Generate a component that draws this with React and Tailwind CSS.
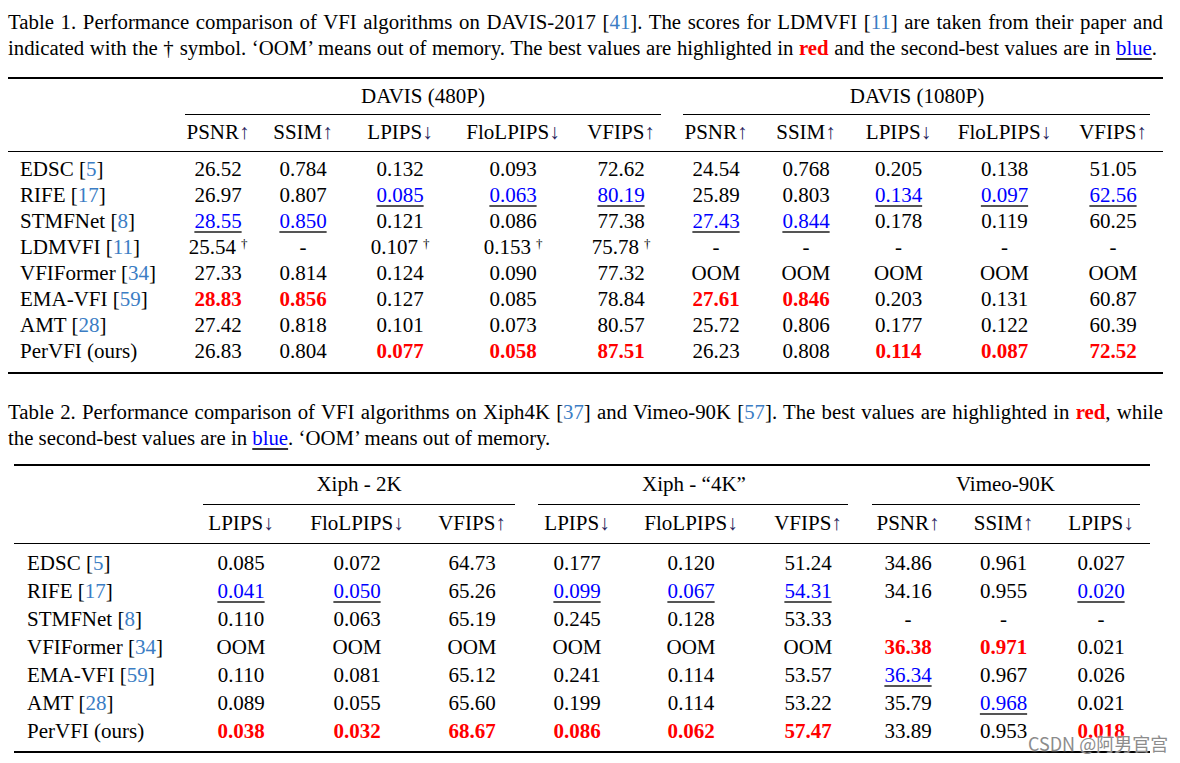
import React from "react";

const t1 = [
  ["EDSC", "5", ["26.52", "0.784", "0.132", "0.093", "72.62", "24.54", "0.768", "0.205", "0.138", "51.05"]],
  ["RIFE", "17", ["26.97", "0.807", "_0.085", "_0.063", "_80.19", "25.89", "0.803", "_0.134", "_0.097", "_62.56"]],
  ["STMFNet", "8", ["_28.55", "_0.850", "0.121", "0.086", "77.38", "_27.43", "_0.844", "0.178", "0.119", "60.25"]],
  ["LDMVFI", "11", ["25.54†", "-", "0.107†", "0.153†", "75.78†", "-", "-", "-", "-", "-"]],
  ["VFIFormer", "34", ["27.33", "0.814", "0.124", "0.090", "77.32", "OOM", "OOM", "OOM", "OOM", "OOM"]],
  ["EMA-VFI", "59", ["*28.83", "*0.856", "0.127", "0.085", "78.84", "*27.61", "*0.846", "0.203", "0.131", "60.87"]],
  ["AMT", "28", ["27.42", "0.818", "0.101", "0.073", "80.57", "25.72", "0.806", "0.177", "0.122", "60.39"]],
  ["PerVFI (ours)", null, ["26.83", "0.804", "*0.077", "*0.058", "*87.51", "26.23", "0.808", "*0.114", "*0.087", "*72.52"]],
];

const t2 = [
  ["EDSC", "5", ["0.085", "0.072", "64.73", "0.177", "0.120", "51.24", "34.86", "0.961", "0.027"]],
  ["RIFE", "17", ["_0.041", "_0.050", "65.26", "_0.099", "_0.067", "_54.31", "34.16", "0.955", "_0.020"]],
  ["STMFNet", "8", ["0.110", "0.063", "65.19", "0.245", "0.128", "53.33", "-", "-", "-"]],
  ["VFIFormer", "34", ["OOM", "OOM", "OOM", "OOM", "OOM", "OOM", "*36.38", "*0.971", "0.021"]],
  ["EMA-VFI", "59", ["0.110", "0.081", "65.12", "0.241", "0.114", "53.57", "_36.34", "0.967", "0.026"]],
  ["AMT", "28", ["0.089", "0.055", "65.60", "0.199", "0.114", "53.22", "35.79", "_0.968", "0.021"]],
  ["PerVFI (ours)", null, ["*0.038", "*0.032", "*68.67", "*0.086", "*0.062", "*57.47", "33.89", "0.953", "*0.018"]],
];

function Cite({ n }) {
  return <span className="text-[#3b7dc4]">{n}</span>;
}

function Val({ v }) {
  let text = v;
  let dagger = false;
  if (text.endsWith("†")) {
    dagger = true;
    text = text.slice(0, -1);
  }
  if (text.startsWith("_")) {
    return (
      <span className="text-[#0000ff] underline decoration-[#555] decoration-[1.5px] underline-offset-[3px]">
        {text.slice(1)}
      </span>
    );
  }
  if (text.startsWith("*")) {
    return <span className="font-bold text-[#ff0000]">{text.slice(1)}</span>;
  }
  return (
    <span>
      {text}
      {dagger && <sup className="ml-[5px] text-[13px]">†</sup>}
    </span>
  );
}

function Head({ label, up, h = "h-[36px]" }) {
  return (
    <div className={`flex ${h} items-center justify-center`}>
      {label}
      <span className="text-[#2a1f5c]">{up ? "↑" : "↓"}</span>
    </div>
  );
}

function Method({ name, cite, pad }) {
  return (
    <div className={pad}>
      {name}
      {cite && (
        <>
          {" ["}
          <Cite n={cite} />
          {"]"}
        </>
      )}
    </div>
  );
}

export default function App() {
  const t1Cols = "grid grid-cols-[167px_86px_84px_110px_116px_100px_90px_90px_95px_117px_100px]";
  const t2Cols = "grid grid-cols-[171px_112px_120px_110px_100px_128px_106px_94px_97px_98px]";

  return (
    <div className="relative w-[1180px] h-[763px] overflow-hidden bg-white text-black font-['Liberation_Serif',serif]">
      {/* Table 1 caption */}
      <div className="w-[1163px] pl-[8px] pt-[9px] text-[20.8px] leading-[26px] whitespace-nowrap">
        <div className="text-justify [text-align-last:justify]">
          Table 1. Performance comparison of VFI algorithms on DAVIS-2017 [<Cite n="41" />]. The scores for LDMVFI [<Cite n="11" />] are taken from their paper and
        </div>
        <div className="text-justify [text-align-last:justify] pr-[6px]">
          indicated with the † symbol. ‘OOM’ means out of memory. The best values are highlighted in{" "}
          <span className="font-bold text-[#ff0000]">red</span> and the second-best values are in{" "}
          <span className="text-[#0000ff] underline decoration-[#333] underline-offset-[3px]">blue</span>.
        </div>
      </div>

      {/* Table 1 */}
      <div className="ml-[8px] mt-[16px] w-[1155px] text-[21px]">
        <div className="h-[2px] bg-black" />
        <div className={t1Cols}>
          <div />
          <div className="col-span-5 flex flex-col">
            <div className="flex h-[35px] items-center justify-center">DAVIS (480P)</div>
            <div className="mx-[10px] h-px bg-black" />
          </div>
          <div className="col-span-5 flex flex-col">
            <div className="flex h-[35px] items-center justify-center">DAVIS (1080P)</div>
            <div className="ml-[12px] mr-[13px] h-px bg-black" />
          </div>
          <div />
          <Head label="PSNR" up />
          <Head label="SSIM " up />
          <Head label="LPIPS" />
          <Head label="FloLPIPS" />
          <Head label="VFIPS" up />
          <Head label="PSNR" up />
          <Head label="SSIM" up />
          <Head label="LPIPS" />
          <Head label="FloLPIPS" />
          <Head label="VFIPS" up />
        </div>
        <div className="h-px bg-black" />
        <div className={`${t1Cols} pt-[5px] pb-[7px]`}>
          {t1.map(([name, cite, vals]) => (
            <React.Fragment key={name}>
              <div className="flex h-[26px] items-center">
                <Method name={name} cite={cite} pad="pl-[12px]" />
              </div>
              {vals.map((v, i) => (
                <div key={i} className="flex h-[26px] items-center justify-center">
                  <Val v={v} />
                </div>
              ))}
            </React.Fragment>
          ))}
        </div>
        <div className="h-[2px] bg-black" />
      </div>

      {/* Table 2 caption */}
      <div className="mt-[25px] w-[1163px] pl-[8px] text-[20.8px] leading-[26px] whitespace-nowrap">
        <div className="text-justify [text-align-last:justify]">
          Table 2. Performance comparison of VFI algorithms on Xiph4K [<Cite n="37" />] and Vimeo-90K [<Cite n="57" />]. The best values are highlighted in{" "}
          <span className="font-bold text-[#ff0000]">red</span>, while
        </div>
        <div>
          the second-best values are in{" "}
          <span className="text-[#0000ff] underline decoration-[#333] underline-offset-[3px]">blue</span>. ‘OOM’ means out of memory.
        </div>
      </div>

      {/* Table 2 */}
      <div className="ml-[14px] mt-[13px] w-[1136px] text-[21px]">
        <div className="h-[2px] bg-black" />
        <div className={t2Cols}>
          <div />
          <div className="col-span-3 flex flex-col">
            <div className="flex h-[38px] items-center justify-center pl-[6px]">Xiph - 2K</div>
            <div className="ml-[18px] mr-[12px] h-px bg-black" />
          </div>
          <div className="col-span-3 flex flex-col">
            <div className="flex h-[38px] items-center justify-center">Xiph - “4K”</div>
            <div className="ml-[11px] mr-[13px] h-px bg-black" />
          </div>
          <div className="col-span-3 flex flex-col">
            <div className="flex h-[38px] items-center justify-center">Vimeo-90K</div>
            <div className="ml-[11px] mr-[10px] h-px bg-black" />
          </div>
          <div />
          <Head label="LPIPS" h="h-[38px]" />
          <Head label="FloLPIPS" h="h-[38px]" />
          <Head label="VFIPS" up h="h-[38px]" />
          <Head label="LPIPS" h="h-[38px]" />
          <Head label="FloLPIPS" h="h-[38px]" />
          <Head label="VFIPS" up h="h-[38px]" />
          <Head label="PSNR" up h="h-[38px]" />
          <Head label="SSIM" up h="h-[38px]" />
          <Head label="LPIPS" h="h-[38px]" />
        </div>
        <div className="h-px bg-black" />
        <div className={`${t2Cols} pt-[6px] pb-[5px]`}>
          {t2.map(([name, cite, vals]) => (
            <React.Fragment key={name}>
              <div className="flex h-[28px] items-center">
                <Method name={name} cite={cite} pad="pl-[13px]" />
              </div>
              {vals.map((v, i) => (
                <div key={i} className="flex h-[28px] items-center justify-center">
                  <Val v={v} />
                </div>
              ))}
            </React.Fragment>
          ))}
        </div>
        <div className="h-[2px] bg-black" />
      </div>

      {/* watermark */}
      <div className="absolute left-[1028px] top-[731px] text-[18px] leading-[24px] text-[#8c8c8c] font-['Noto_Sans_CJK_SC',sans-serif] [text-shadow:0_0_2px_#fff]">
        CSDN @阿男官宫
      </div>
    </div>
  );
}
